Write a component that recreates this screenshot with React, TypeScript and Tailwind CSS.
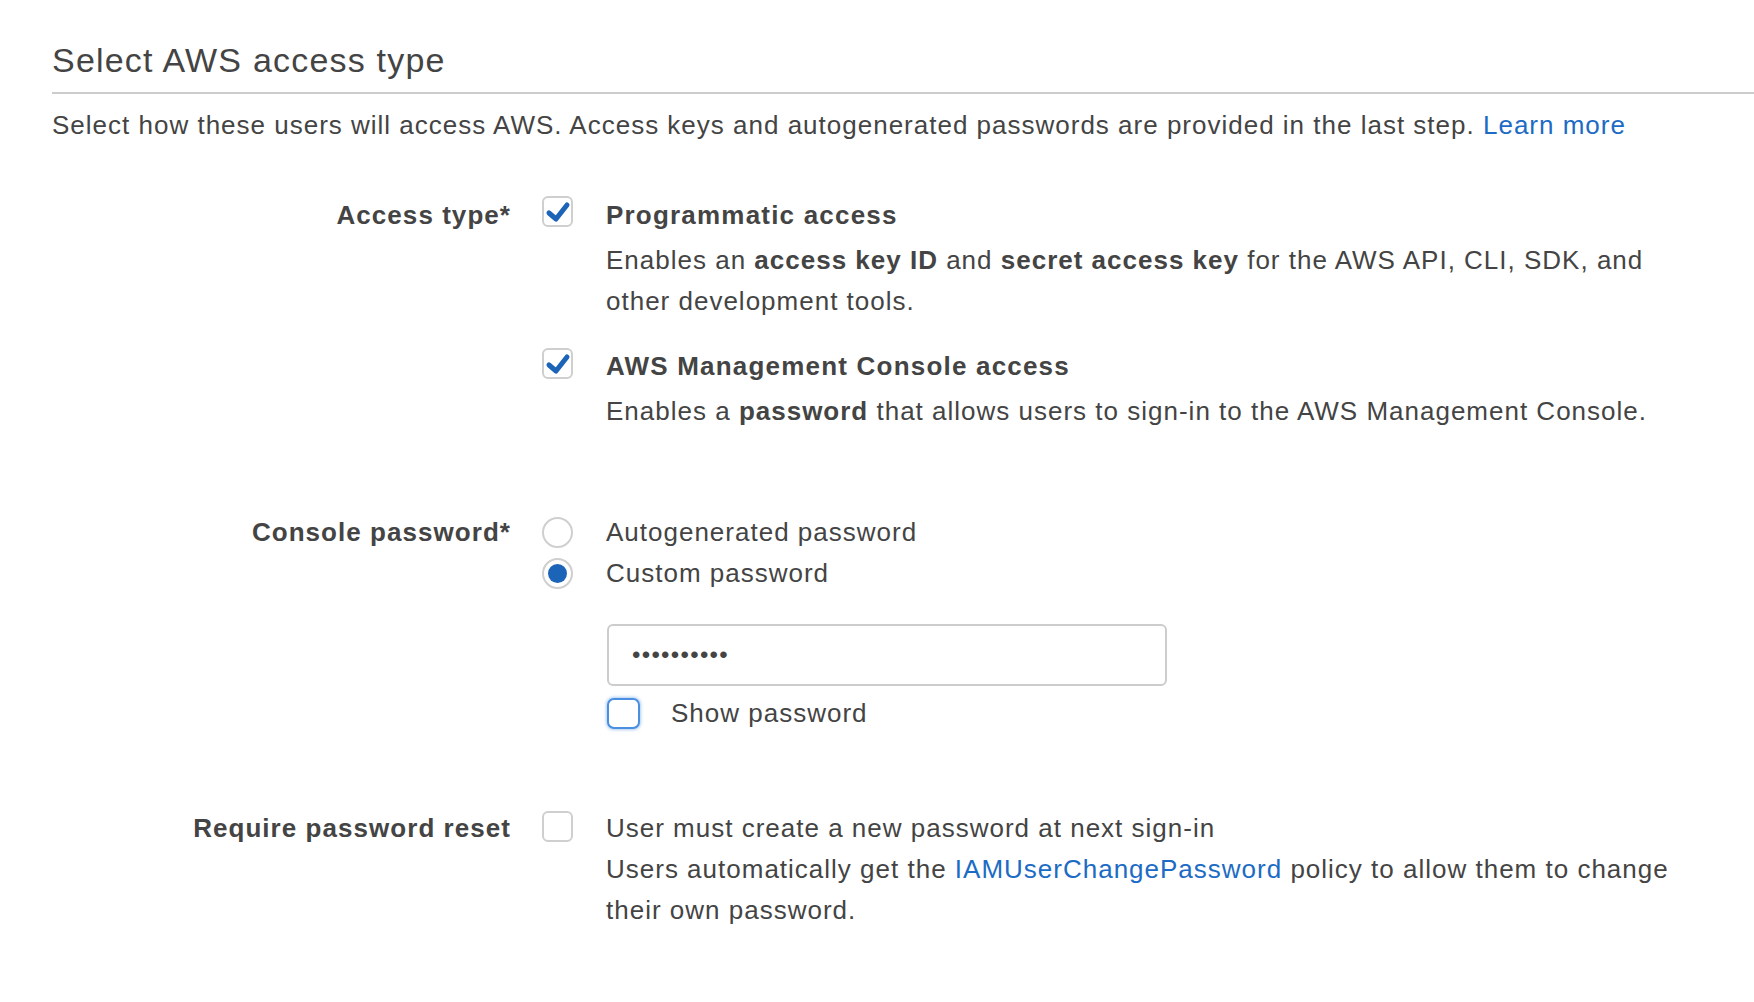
import React from "react";

const font = { fontFamily: '"Liberation Sans", Arial, sans-serif' };

function CheckBox({ checked, focused }: { checked?: boolean; focused?: boolean }) {
    return (
        <div
            className={
                focused
                    ? "w-[33px] h-[31px] rounded-[7px] border-2 border-[#4a8fe0] bg-white shadow-[0_0_3px_1px_rgba(74,143,224,0.45)]"
                    : "w-[31px] h-[31px] rounded-[6px] border-2 border-[#cfcfcf] bg-white flex items-center justify-center"
            }
        >
            {checked && (
                <svg width="27" height="27" viewBox="0 0 27 27">
                    <path d="M5 15 L12 21 L23 7" fill="none" stroke="#1b64b7" strokeWidth="5" strokeLinecap="round" strokeLinejoin="round" />
                </svg>
            )}
        </div>
    );
}

function Radio({ checked }: { checked?: boolean }) {
    return (
        <div className="w-[31px] h-[31px] rounded-full border-2 border-[#cfcfcf] bg-white flex items-center justify-center">
            {checked && <div className="w-[19px] h-[19px] rounded-full bg-[#1b64b7]" />}
        </div>
    );
}

function Row({ label, children, className }: { label: string; children: React.ReactNode; className?: string }) {
    return (
        <div className={"flex " + (className ?? "")}>
            <div className="w-[511px] shrink-0 text-right font-bold leading-[41px] tracking-[1.05px]">{label}</div>
            <div className="ml-[31px]">{children}</div>
        </div>
    );
}

export default function App() {
    return (
        <div className="min-h-screen bg-white text-[#444444] text-[26px] tracking-[1px]" style={font}>
            <div className="pl-[52px] pt-[40px]">
                <div className="border-b-2 border-[#cccccc] pb-[12px]">
                    <h1 className="text-[34px] leading-[40px] font-normal tracking-[1.2px]">Select AWS access type</h1>
                </div>
                <p className="mt-[11px] leading-[40px]">
                    Select how these users will access AWS. Access keys and autogenerated passwords are provided in the last step.{" "}
                    <a className="text-[#1c6bc4]">Learn more</a>
                </p>
            </div>

            {/* Access type */}
            <Row label="Access type*" className="mt-[50px]">
                <div className="flex flex-col">
                    <div className="flex">
                        <div className="w-[31px] pt-[1px]"><CheckBox checked /></div>
                        <div className="ml-[33px] w-[1095px]">
                            <div className="font-bold leading-[41px] tracking-[1.2px]">Programmatic access</div>
                            <div className="mt-[4px] leading-[41px]">
                                Enables an <b>access key ID</b> and <b>secret access key</b> for the AWS API, CLI, SDK, and other development tools.
                            </div>
                        </div>
                    </div>
                    <div className="flex mt-[24px]">
                        <div className="w-[31px] pt-[2px]"><CheckBox checked /></div>
                        <div className="ml-[33px] w-[1095px]">
                            <div className="font-bold leading-[41px] tracking-[1.2px]">AWS Management Console access</div>
                            <div className="mt-[4px] leading-[41px]">
                                Enables a <b>password</b> that allows users to sign-in to the AWS Management Console.
                            </div>
                        </div>
                    </div>
                </div>
            </Row>

            {/* Console password */}
            <Row label="Console password*" className="mt-[80px]">
                <div className="flex flex-col">
                    <div className="flex items-center h-[41px]">
                        <Radio />
                        <span className="ml-[33px]">Autogenerated password</span>
                    </div>
                    <div className="flex items-center h-[41px]">
                        <Radio checked />
                        <span className="ml-[33px]">Custom password</span>
                    </div>
                    <div className="ml-[65px] mt-[30px] w-[560px] h-[62px] rounded-[6px] border-2 border-[#cccccc] flex items-center pl-[23px]">
                        <span className="text-[24px] tracking-[1.3px] leading-none">••••••••••</span>
                    </div>
                    <div className="ml-[65px] mt-[7px] flex items-center h-[41px]">
                        <CheckBox focused />
                        <span className="ml-[31px]">Show password</span>
                    </div>
                </div>
            </Row>

            {/* Require password reset */}
            <Row label="Require password reset" className="mt-[74px]">
                <div className="flex">
                    <div className="w-[31px] pt-[3px]"><CheckBox /></div>
                    <div className="ml-[33px] w-[1095px] leading-[41px]">
                        <div>User must create a new password at next sign-in</div>
                        <div>
                            Users automatically get the <a className="text-[#1c6bc4]">IAMUserChangePassword</a> policy to allow them to change their own password.
                        </div>
                    </div>
                </div>
            </Row>
        </div>
    );
}
